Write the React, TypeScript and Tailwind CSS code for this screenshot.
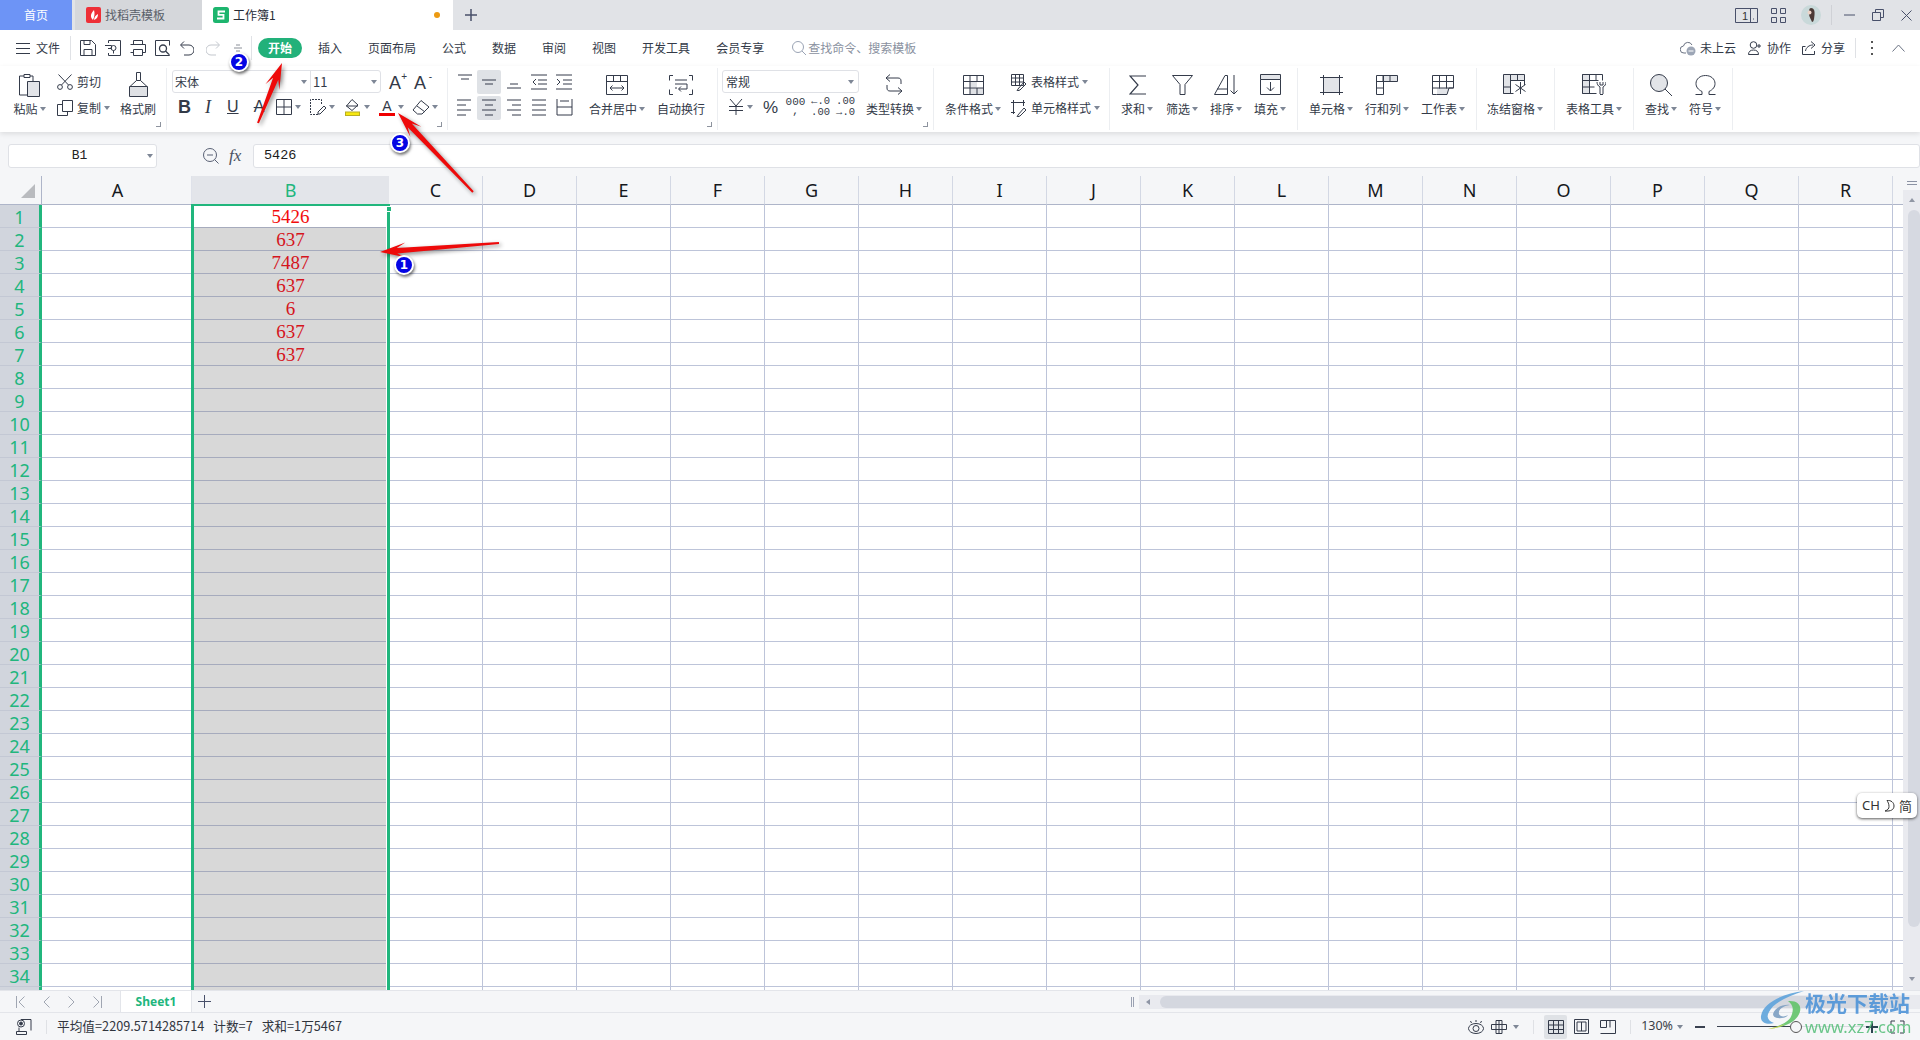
import React from "react";

const INK = "#343b4a";
type IP = { w: number; h: number; children?: React.ReactNode; sw?: number; className?: string };
const I = ({ w, h, children, sw = 1, className = "" }: IP) => (
  <svg width={w} height={h} viewBox={`0 0 ${w} ${h}`} fill="none" stroke={INK} strokeWidth={sw} className={`shrink-0 ${className}`}>
    {children}
  </svg>
);
const Caret = ({ className = "" }: { className?: string }) => (
  <svg width="6" height="4" viewBox="0 0 6 4" className={`shrink-0 ${className}`}><path d="M0 0h6L3 4z" fill="#7e8796" /></svg>
);
const Launcher = () => (
  <span className="absolute right-[5px] bottom-[3px] w-[5px] h-[5px] border-r border-b border-[#8d939e]" />
);

const Large = ({ w, icon, label, caret = true }: { w: number; icon: React.ReactNode; label: string; caret?: boolean }) => (
  <div className="flex flex-col items-center shrink-0" style={{ width: w }}>
    <div className="h-[33px] flex items-center justify-center">{icon}</div>
    <div className="h-[16px] flex items-center whitespace-nowrap">
      <span>{label}</span>
      {caret && <Caret className="ml-[2px]" />}
    </div>
  </div>
);
const Group = ({ w, pl, children }: { w: number; pl: number; children: React.ReactNode }) => (
  <div className="relative h-[62px] flex border-r border-[#eceef1] shrink-0" style={{ width: w, paddingLeft: pl }}>
    {children}
  </div>
);

const icons = {
  paste: (
    <I w={21} h={26}>
      <path d="M5 4H.5v19H8M11 4h3v5" />
      <path d="M5 2.500h6v3H5z" />
      <path d="M8.500 9.500h12v15h-12z" fill="#e2e4e8" />
    </I>
  ),
  cut: (
    <I w={16} h={16}>
      <circle cx="3" cy="13" r="2.400" /><circle cx="13" cy="13" r="2.400" />
      <path d="M1.500 .5 11.500 11M14.500 .5 4.500 11" />
    </I>
  ),
  copy: (
    <I w={16} h={16}>
      <path d="M5.500 .5h10v11h-10z" /><path d="M5.500 4.500h-5v11h10v-4" />
    </I>
  ),
  brush: (
    <I w={19} h={26}>
      <path d="M7.500 .5h4v8h-4z" />
      <path d="M7.500 8.500 1 14.500h17l-6.500-6" />
      <path d="M.5 14.500h18v10H.5z" fill="#dfe1e5" />
    </I>
  ),
};

const Menu = ({ ml, children }: { ml: number; children: string }) => (
  <span className="whitespace-nowrap" style={{ marginLeft: ml }}>{children}</span>
);

const cols = "CDEFGHIJKLMNOPQR".split("");
const values: Record<number, string> = { 1: "5426", 2: "637", 3: "7487", 4: "637", 5: "6", 6: "637", 7: "637" };

function arrow(tx: number, ty: number, px: number, py: number) {
  const L = Math.hypot(px - tx, py - ty);
  const ux = (px - tx) / L, uy = (py - ty) / L;
  const nx = -uy, ny = ux;
  const pt = (d: number, o: number) => `${tx + ux * d + nx * o},${ty + uy * d + ny * o}`;
  return [pt(0, -1), pt(L - 17, -2.8), pt(L - 26, -7.5), pt(L, 0), pt(L - 26, 7.5), pt(L - 17, 2.8), pt(0, 1)].join(" ");
}

const Badge = ({ n, className }: { n: string; className: string }) => (
  <div className={`absolute z-20 w-[20px] h-[20px] rounded-full bg-[#0404e4] border-2 border-white shadow-[1px_2px_3px_rgba(0,0,0,0.55)] flex items-center justify-center text-white font-bold text-[12px] leading-none font-['DejaVu_Sans',sans-serif] ${className}`}>
    {n}
  </div>
);

export default function App() {
  return (
    <div className="relative w-[1920px] h-[1040px] overflow-hidden bg-white text-[12px] text-[#333a48] font-['Noto_Sans_CJK_SC','Noto_Sans',sans-serif]">
      {/* Title bar */}
      <div className="h-[30px] bg-[#e1e3e7] flex items-stretch">
        <div className="w-[72px] bg-[#6d94f6] text-white flex items-center justify-center">首页</div>
        <div className="w-[127px] ml-[3px] bg-[#d5d7db] flex items-center pl-[11px] text-[#5a5f69]">
          <svg width="15" height="16" viewBox="0 0 15 16" className="shrink-0">
            <rect width="15" height="16" rx="2" fill="#ee2f37" />
            <path d="M7 13C3.500 10 5 6 8 3c1 3 .5 7-1 10zM8 13c3-1 4-3 4-6-2 1-4 3-4 6z" fill="#fff" />
          </svg>
          <span className="ml-[4px]">找稻壳模板</span>
        </div>
        <div className="w-[251px] bg-white flex items-center pl-[11px] text-[#262b35]">
          <svg width="16" height="16" viewBox="0 0 16 16" className="shrink-0">
            <rect width="16" height="16" rx="2.500" fill="#1db56e" />
            <path d="M12 4.500H5.500v3.300h5v3.700H4" fill="none" stroke="#fff" strokeWidth="1.800" />
          </svg>
          <span className="ml-[4px]">工作簿1</span>
          <span className="ml-auto mr-[13px] w-[6px] h-[6px] rounded-full bg-[#ec9a12]" />
        </div>
        <div className="ml-[12px] flex items-center">
          <I w={12} h={12} sw={1.500}><path d="M6 0v12M0 6h12" stroke="#48506a" /></I>
        </div>
        <div className="ml-auto flex items-center pr-[8px]">
          <I w={23} h={15}>
            <path d="M.5 .5h22v14H.5zM15.500 .5v14" stroke="#48506a" />
            <text x="7" y="12" fontSize="11" fill="#333" stroke="none" fontFamily="Liberation Sans">1</text>
            <path d="M18 11h1" stroke="#48506a" />
          </I>
          <I w={15} h={15} className="ml-[13px]"><path d="M.5 .5h5v5h-5zM9.500 .5h5v5h-5zM.5 9.500h5v5h-5zM9.500 9.500h5v5h-5z" stroke="#48506a" /></I>
          <svg width="20" height="20" viewBox="0 0 20 20" className="ml-[15px] shrink-0">
            <circle cx="10" cy="10" r="10" fill="#c9d9da" />
            <path d="M10 3c3 0 4 3 3.500 7S13 17 11 17c-1-3-3-5-3-8s0-6 2-6z" fill="#4b3a36" />
            <circle cx="8.500" cy="7.500" r="2" fill="#ecd3c7" />
          </svg>
          <span className="ml-[10px] w-px h-[20px] bg-[#cfd1d6]" />
          <I w={11} h={2} className="ml-[12px]"><path d="M0 1h11" stroke="#48506a" /></I>
          <I w={12} h={12} className="ml-[17px]"><path d="M.5 3.500h8v8h-8zM3.500 3V.5h8v8H9" stroke="#48506a" /></I>
          <I w={11} h={11} className="ml-[17px]"><path d="M.5 .5l10 10M10.500 .5l-10 10" stroke="#48506a" /></I>
        </div>
      </div>

      {/* Menu row */}
      <div className="h-[36px] flex items-center pl-[16px] pr-[15px] bg-white">
        <I w={14} h={11}><path d="M0 .5h14M0 5.500h14M0 10.500h14" /></I>
        <Menu ml={6}>文件</Menu>
        <span className="ml-[10px] w-px h-[24px] bg-[#e0e2e6]" />
        <div className="ml-[9px] flex items-center gap-[9px]">
          <I w={16} h={16}><path d="M.5 .5h11l4 4v11H.5zM4 15v-5.500h8V15M4 .5v4h6v-4" /></I>
          <I w={16} h={16}><path d="M3.500 3V.5h12v15h-12V13M0 5.500h6.500v3H3M6 8a2.500 2.500 0 1 0 5 0 2.500 2.500 0 0 0-5 0zM8.500 10.500v3" /></I>
          <I w={16} h={16}><path d="M3.500 4.500v-4h9v4M.5 4.500h15v8h-3M3.500 12.500h-3M3.500 9.500h9v6h-9z" /></I>
          <I w={15} h={16}><path d="M14.500 14.500v1H.5V.5h14v5" /><circle cx="8" cy="8.500" r="3.500" strokeWidth="1.300" /><path d="M10.500 11l3.500 3.500" strokeWidth="1.300" /></I>
          <I w={14} h={15} className="ml-[1px]"><path d="M4 .5 .5 4 4 7.500M1 4h8a4.500 4.500 0 0 1 0 10H4" /></I>
          <I w={14} h={15} className="ml-[3px]"><g stroke="#c3c7cd"><path d="M10 .5 13.500 4 10 7.500M13 4H5a4.500 4.500 0 0 0 0 10h5" /></g></I>
          <I w={8} h={8} className="ml-[5px]"><path d="M2 1h4M0 4h8M2 7h4" stroke="#8a8f98" /></I>
        </div>
        <span className="ml-[9px] w-px h-[24px] bg-[#e0e2e6]" />
        <span className="ml-[6px] w-[44px] h-[20px] rounded-full bg-[#22b17a] text-white flex items-center justify-center font-bold">开始</span>
        <Menu ml={16}>插入</Menu>
        <Menu ml={26}>页面布局</Menu>
        <Menu ml={26}>公式</Menu>
        <Menu ml={26}>数据</Menu>
        <Menu ml={26}>审阅</Menu>
        <Menu ml={26}>视图</Menu>
        <Menu ml={26}>开发工具</Menu>
        <Menu ml={26}>会员专享</Menu>
        <I w={14} h={14} className="ml-[28px]"><g stroke="#9aa3b4"><circle cx="6" cy="6" r="5.500" /><path d="M10 10l4 4" /></g></I>
        <span className="ml-[2px] text-[#8a91a0]">查找命令、搜索模板</span>
        <div className="ml-auto flex items-center">
          <svg width="16" height="15" viewBox="0 0 16 15" className="shrink-0">
            <path d="M6 12H4a3.500 3.500 0 0 1-.500-7A4.500 4.500 0 0 1 12 4" fill="none" stroke="#6a7282" />
            <circle cx="11" cy="10" r="4.500" fill="#9da6b6" /><path d="M8.500 10h5" stroke="#fff" />
          </svg>
          <span className="ml-[4px]">未上云</span>
          <I w={14} h={14} className="ml-[12px]"><circle cx="5.500" cy="4" r="3.300" /><path d="M.5 13.500c0-3 2-4.500 5-4.500s5 1.500 5 4.500zM11 3v4M9 5h4" /></I>
          <span className="ml-[5px]">协作</span>
          <I w={14} h={14} className="ml-[11px]"><path d="M3.500 5.500h-3v8h12V10M3.500 10C4 6.500 7 4 11 4M9 .5 13 4l-4 3.500" /></I>
          <span className="ml-[5px]">分享</span>
          <span className="ml-[10px] w-px h-[20px] bg-[#dfe1e5]" />
          <span className="ml-[15px] flex flex-col gap-[4px]">
            <span className="w-[2px] h-[2px] bg-[#555]" /><span className="w-[2px] h-[2px] bg-[#555]" /><span className="w-[2px] h-[2px] bg-[#555]" />
          </span>
          <I w={13} h={8} className="ml-[19px]"><path d="M.5 7.500 6.500 1l6 6.500" stroke="#6a7282" /></I>
        </div>
      </div>

      {/* Ribbon */}
      <div className="relative z-10 h-[66px] pt-[2px] flex bg-white shadow-[0_2px_5px_rgba(0,0,0,0.1)]">
        <Group w={167} pl={13}>
          <Large w={33} icon={icons.paste} label="粘贴" />
          <div className="ml-[11px] w-[55px] pt-[1px] shrink-0">
            <div className="h-[26px] flex items-center">{icons.cut}<span className="ml-[4px]">剪切</span></div>
            <div className="h-[26px] flex items-center">{icons.copy}<span className="ml-[4px]">复制</span><Caret className="ml-[3px]" /></div>
          </div>
          <div className="ml-[8px]"><Large w={36} icon={icons.brush} label="格式刷" caret={false} /></div>
          <Launcher />
        </Group>

        <Group w={281} pl={5}>
          <div className="pt-[2px]">
            <div className="flex items-center">
              <div className="w-[209px] h-[23px] border border-[#dfe1e6] rounded-[3px] flex items-center">
                <div className="w-[138px] h-full border-r border-[#dfe1e6] flex items-center pl-[2px] pr-[3px]"><span>宋体</span><Caret className="ml-auto" /></div>
                <div className="flex-1 h-full flex items-center pl-[2px] pr-[3px]"><span className="text-[13px]">11</span><Caret className="ml-auto" /></div>
              </div>
              <div className="ml-[8px] flex items-end h-[20px] w-[15px] font-['Liberation_Sans',sans-serif] text-[18px] leading-none relative">A<span className="text-[10px] absolute -right-[3px] top-0">+</span></div>
              <div className="ml-[10px] flex items-end h-[20px] w-[15px] font-['Liberation_Sans',sans-serif] text-[18px] leading-none relative">A<span className="text-[10px] absolute -right-[3px] top-0">-</span></div>
            </div>
            <div className="mt-[1px] h-[26px] flex items-center pl-[6px]">
              <span className="w-[12px] font-['Liberation_Sans',sans-serif] font-bold text-[18px] leading-none">B</span>
              <span className="ml-[15px] w-[8px] font-['Liberation_Serif',serif] italic text-[18px] leading-none">I</span>
              <span className="ml-[14px] w-[12px] font-['Liberation_Sans',sans-serif] text-[16px] leading-none underline">U</span>
              <span className="ml-[13px] w-[14px] font-['Liberation_Sans',sans-serif] text-[16px] leading-none line-through text-center">A</span>
              <I w={16} h={16} className="ml-[10px]"><path d="M.5 .5h15v15H.5zM8 .5v15M.5 8h15" /></I>
              <Caret className="ml-[3px]" />
              <I w={16} h={16} className="ml-[9px]"><path d="M8 15.500H.5V.5h11v5" strokeDasharray="2 1" /><path d="M14 7l2 2-6 6H8v-2z" /></I>
              <Caret className="ml-[3px]" />
              <svg width="15" height="17" viewBox="0 0 15 17" fill="none" stroke={INK} className="ml-[10px] shrink-0">
                <path d="M7 .5 13 6 7 11.500 1.500 7z" /><path d="M1 7h12" />
                <rect x=".5" y="13" width="14" height="3.500" fill="#f7e810" stroke="#b9ae22" />
              </svg>
              <Caret className="ml-[4px]" />
              <div className="ml-[9px] w-[16px] flex flex-col items-center">
                <span className="font-['Liberation_Sans',sans-serif] text-[14px] leading-[14px]">A</span>
                <span className="w-[16px] h-[3px] bg-[#f00000]" />
              </div>
              <Caret className="ml-[3px]" />
              <I w={18} h={15} className="ml-[8px]"><path d="M9 .5 17 7l-7 7H5.500L1 10z" /><path d="M5 6l8 6" /></I>
              <Caret className="ml-[2px]" />
            </div>
          </div>
          <Launcher />
        </Group>

        <Group w={270} pl={4}>
          <div className="pt-[2px] grid grid-cols-[repeat(5,24px)] gap-x-[1px] gap-y-[2px] h-min shrink-0">
            {[
              "M3 4h14M6 8h8",
              "M2 9h14M5 13h8",
              "M5 13h8M2 17h14",
              "M1 4h16M8 9h9M8 13h9M1 18h16M6 8l-3 3 3 3",
              "M1 4h16M8 9h9M8 13h9M1 18h16M2 8l3 3-3 3",
              "M2 3h14M2 8h9M2 13h14M2 18h9",
              "M2 3h14M5 8h8M2 13h14M5 18h8",
              "M2 3h14M7 8h9M2 13h14M7 18h9",
              "M2 3h14M2 8h14M2 13h14M2 18h14",
              "M2 2v16M17 2v16M2 18h15M2 10h15M5 4h9",
            ].map((d, i) => (
              <div key={i} className={`h-[24px] flex items-center justify-center rounded-[2px] ${i === 1 || i === 6 ? "bg-[#dfe2e6]" : ""}`}>
                <I w={18} h={22}><path d={d} /></I>
              </div>
            ))}
          </div>
          <div className="ml-[12px]"><Large w={58} label="合并居中" icon={<I w={22} h={20}><path d="M.5.5h21v19H.5zM.5 6.500h21M7.500.5v6M14.500.5v6M4 13h14M6.500 10.500 4 13l2.500 2.500M15.500 10.500 18 13l-2.500 2.500" /></I>} /></div>
          <div className="ml-[11px]"><Large w={48} caret={false} label="自动换行" icon={<I w={24} h={20}><path d="M4 .5H.5v5M20 .5h3.500v5M.5 14.500v5H4M23.500 14.500v5H20M6 5h12M6 9h12v5H10M12 11.500 9.500 14l2.500 2.500M6 13h2" /></I>} /></div>
          <Launcher />
        </Group>

        <Group w={216} pl={4}>
          <div className="pt-[2px] w-[137px] shrink-0">
            <div className="h-[23px] border border-[#dfe1e6] rounded-[3px] flex items-center pl-[3px] pr-[4px]"><span>常规</span><Caret className="ml-auto" /></div>
            <div className="mt-[1px] h-[26px] flex items-center">
              <I w={14} h={16} className="ml-[7px]"><path d="M1 0l6 7 6-7M0 7.500h14M0 11.500h14M7 7v9" /></I>
              <Caret className="ml-[4px]" />
              <span className="ml-[10px] w-[14px] text-center font-['Liberation_Sans',sans-serif] text-[17px] leading-none">%</span>
              <span className="ml-[10px] w-[17px] flex flex-col items-center font-['Liberation_Mono',monospace] text-[11px] leading-[9px]"><span>000</span><span>,</span></span>
              <span className="ml-[9px] w-[17px] flex flex-col items-end font-['Liberation_Mono',monospace] text-[10.500px] leading-[11px]"><span>←.0</span><span>.00</span></span>
              <span className="ml-[8px] w-[17px] flex flex-col items-end font-['Liberation_Mono',monospace] text-[10.500px] leading-[11px]"><span>.00</span><span>→.0</span></span>
            </div>
          </div>
          <div className="ml-[6px]"><Large w={58} label="类型转换" icon={<I w={18} h={21}><path d="M5 .5 1 4l4 3.500M1 4h12c2 0 3 1 3 3v3M13 20.500l4-3.500-4-3.500M17 17H5c-2 0-3-1-3-3v-3" /></I>} /></div>
          <Launcher />
        </Group>

        <Group w={176} pl={10}>
          <Large w={58} label="条件格式" icon={
            <I w={21} h={20}>
              <path d="M7 6.500h7v6H7zM7 13h14v6H7z" fill="#dfe1e5" stroke="none" />
              <path d="M.5.5h20v19H.5zM.5 6.500h20M.5 13h20M7 .5v19M14 .5v6M14 13v6" />
            </I>
          } />
          <div className="ml-[9px] pt-[1px] shrink-0">
            <div className="h-[26px] flex items-center">
              <I w={16} h={17}><path d="M.5.5h12v11H.5zM.5 4h12M.5 8h12M4.500 .5v11M8.500 .5v11M7 15l6-7 2 2-6 6-3 1z" /></I>
              <span className="ml-[4px]">表格样式</span><Caret className="ml-[3px]" />
            </div>
            <div className="h-[26px] flex items-center">
              <I w={16} h={17}><path d="M0 2.500h14M2.500 0v14M12.500 0v6M0 12.500h4M7 15l6-7 2 2-6 6-3 1z" /></I>
              <span className="ml-[4px]">单元格样式</span><Caret className="ml-[3px]" />
            </div>
          </div>
        </Group>

        <Group w={188} pl={10}>
          <Large w={34} label="求和" icon={<I w={17} h={20}><path d="M17 1H1l8 9-8 9h16" strokeWidth="1.200" /></I>} />
          <div className="ml-[11px]"><Large w={34} label="筛选" icon={<I w={21} h={20}><path d="M.5.5h20L13 9.500v10H8v-10z" /></I>} /></div>
          <div className="ml-[10px]"><Large w={34} label="排序" icon={<I w={24} h={20}><path d="M11 .5 .5 19.500h13V.5zM3 14h10M20 0v19M16.500 15.500 20 19l3.500-3.500" /></I>} /></div>
          <div className="ml-[10px]"><Large w={34} label="填充" icon={<I w={21} h={21}><path d="M.5.5h20v5H.5z" fill="#e2e4e8" /><path d="M.5 5.500v15h20v-15M10.500 8v9M7 13.500l3.500 3.500 3.500-3.500" /></I>} /></div>
        </Group>

        <Group w={179} pl={10}>
          <Large w={46} label="单元格" icon={<I w={23} h={20}><path d="M4 3h15v14H4z" fill="#e2e4e8" stroke="none" /><path d="M0 2.500h23M0 17.500h23M3.500 0v20M19.500 0v20" /></I>} />
          <div className="ml-[10px]"><Large w={46} label="行和列" icon={<I w={22} h={20}><path d="M7 .5h14.500v6H7z" fill="#e2e4e8" /><path d="M.5.5h7v19h-7zM.5 6.500h7M.5 13h7M14 .5v6" /></I>} /></div>
          <div className="ml-[10px]"><Large w={46} label="工作表" icon={<I w={22} h={20}><path d="M5 13h12l-2 6H5z" fill="#e2e4e8" stroke="none" /><path d="M4.500 19.500H.5V.5h21v12.500H17l-2 6.500H5zM.5 6.500h21M.5 13h21M7.500.5v13M14.500.5v13" /></I>} /></div>
        </Group>

        <Group w={78} pl={9}>
          <Large w={58} label="冻结窗格" icon={
            <I w={24} h={21}>
              <path d="M.5.5h7v19h-7zM7.500.5h14v6h-14z" fill="#e2e4e8" />
              <path d="M.5 13h7M14.500 .5v6M21.500 6v5M.5 19.500h10M17.500 8v12M12.500 10.500l10 7M22.500 10.500l-10 7" />
            </I>
          } />
        </Group>

        <Group w={79} pl={10}>
          <Large w={58} label="表格工具" icon={
            <I w={24} h={21}>
              <path d="M.5.5h7v19h-7z" fill="#e2e4e8" />
              <path d="M.5.5h20v6M.5 6.500h16M.5 13h12M7.500.5v19M14 .5v6M.5 19.500h14M18 20V13c-2-1-3-3-3-5M21 20V13c2-1 3-3 3-5M18 20.500h3M18 8v3h3V8" />
            </I>
          } />
        </Group>

        <Group w={99} pl={10}>
          <Large w={34} label="查找" icon={<I w={22} h={22}><circle cx="9" cy="9" r="8.500" fill="#e2e4e8" /><path d="M15 15l7 7" /></I>} />
          <div className="ml-[10px]"><Large w={34} label="符号" icon={<I w={21} h={20}><path d="M.5 19.500H7v-3C3 14.500 1 12 1 8.500 1 4 5 .5 10.500.5S20 4 20 8.500c0 3.500-2 6-6 8v3h6.500" /></I>} /></div>
        </Group>
      </div>

      {/* Formula bar */}
      <div className="h-[44px] bg-[#f5f6f8] flex pt-[12px] pl-[8px]">
        <div className="w-[149px] h-[24px] bg-white border border-[#dfe1e6] rounded-[3px] flex items-center pr-[3px]">
          <span className="flex-1 text-center font-['Liberation_Mono',monospace] text-[13px] text-[#222] pl-[3px]">B1</span>
          <Caret />
        </div>
        <I w={16} h={16} className="ml-[46px] mt-[4px]"><g stroke="#596074"><circle cx="7" cy="7" r="6.500" /><path d="M4 7h6M11.500 11.500l4 4" /></g></I>
        <span className="ml-[10px] w-[16px] font-['Liberation_Serif',serif] italic text-[17px] leading-[24px] text-[#4a5162]">fx</span>
        <div className="ml-[8px] flex-1 h-[24px] bg-white border border-[#dfe1e6] rounded-[3px] flex items-center pl-[10px] font-['Liberation_Mono',monospace] text-[13.500px] text-[#1c1c1c]">5426</div>
      </div>

      {/* Sheet */}
      <div className="h-[814px] flex">
        <div className="relative w-[1903px] overflow-hidden">
          <div className="grid grid-cols-[42px_150px_197px_repeat(16,94px)_10px] grid-rows-[29px] auto-rows-[23px]">
            <div className="bg-[#f5f6f8] border-b border-r border-[#aeb5c9] flex items-end justify-end pr-[6px] pb-[6px]">
              <svg width="14" height="14" viewBox="0 0 14 14"><path d="M14 0v14H0z" fill="#b9bbbf" /></svg>
            </div>
            <div className="bg-[#f5f6f8] border-b border-r border-b-[#aeb5c9] border-r-[#dfe2ea] flex items-center justify-center pl-[2px] text-[18px] font-['Noto_Sans',sans-serif] text-[#15181d]">A</div>
            <div className="bg-[#e3e5ea] border-b border-[#aeb5c9] flex items-center justify-center text-[18px] font-['Noto_Sans',sans-serif] text-[#21b67d]">B</div>
            {cols.map((c) => (
              <div key={c} className="bg-[#f5f6f8] border-b border-r border-b-[#aeb5c9] border-r-[#d3d8e4] flex items-center justify-center text-[18px] font-['Noto_Sans',sans-serif] text-[#15181d]">{c}</div>
            ))}
            <div className="bg-[#f5f6f8] border-b border-[#aeb5c9]" />
            {Array.from({ length: 35 }, (_, i) => i + 1).map((r) => (
              <React.Fragment key={r}>
                <div className="bg-[#d1d5dd] border-b border-[#c3c8d4] border-r-[3px] border-r-[#21b67d] flex items-center justify-center pt-[1px] text-[18px] leading-none font-['Noto_Sans',sans-serif] text-[#21b67d]">{r < 35 ? r : ""}</div>
                <div className="border-b border-r border-[#bdc4d9]" />
                <div className={`border-b border-[#a6abbd] flex items-center justify-center pt-[1px] font-['Liberation_Serif',serif] text-[19px] leading-none ${r === 1 ? "bg-white text-[#f20c0c]" : "bg-[#d8d8d8] text-[#d5141c]"}`}>
                  {values[r] ?? ""}
                </div>
                {cols.map((c) => <div key={c} className="border-b border-r border-[#bdc4d9]" />)}
                <div className="border-b border-[#bdc4d9]" />
              </React.Fragment>
            ))}
          </div>
          {/* Selection frame */}
          <div className="absolute left-[191px] top-[28px] w-[199px] h-[900px] border-x-[3px] border-t-2 border-[#21b67d] shadow-[inset_-1px_0_0_#fff]" />
          <div className="absolute left-[386px] top-[30px] w-[6px] h-[6px] bg-[#21b67d] border border-white" />
        </div>
        <div className="flex-1 bg-[#e9eaef] flex flex-col items-center">
          <div className="h-[14px] w-full bg-[#f5f6f8] flex flex-col items-center justify-center gap-[2px]">
            <span className="w-[10px] h-px bg-[#8c93a4]" /><span className="w-[10px] h-px bg-[#8c93a4]" />
          </div>
          <svg width="6" height="4" viewBox="0 0 6 4" className="mt-[8px]"><path d="M3 0l3 4H0z" fill="#9096a4" /></svg>
          <div className="mt-[8px] ml-[4px] w-[12px] h-[717px] rounded-full bg-[#d6d9e1]" />
          <svg width="6" height="4" viewBox="0 0 6 4" className="mt-[50px]"><path d="M0 0h6L3 4z" fill="#9096a4" /></svg>
        </div>
      </div>

      {/* Sheet tabs */}
      <div className="h-[22px] bg-[#f5f6f8] border-t border-[#e3e5ea] flex items-center pl-[16px]">
        <I w={9} h={12}><g stroke="#a0a6b2"><path d="M.5 0v12M8.500 .5 3 6l5.500 5.500" /></g></I>
        <I w={7} h={12} className="ml-[18px]"><path d="M6.500 .5 1 6l5.500 5.500" stroke="#a0a6b2" /></I>
        <I w={7} h={12} className="ml-[18px]"><path d="M.5 .5 6 6l-5.500 5.500" stroke="#a0a6b2" /></I>
        <I w={9} h={12} className="ml-[18px]"><g stroke="#a0a6b2"><path d="M8.500 0v12M.5 .5 6 6l-5.500 5.500" /></g></I>
        <div className="ml-[18px] w-[72px] h-full bg-white border-r border-[#e3e5ea] border-l flex items-center justify-center text-[#21b67d] font-bold font-['Noto_Sans',sans-serif]">Sheet1</div>
        <I w={13} h={13} className="ml-[6px]"><path d="M6.500 0v13M0 6.500h13" stroke="#48506a" /></I>
        <span className="ml-[920px] w-[3px] h-[10px] border-x border-[#9aa1b2]" />
        <div className="ml-[5px] flex-1 h-[14px] bg-[#e9eaef] flex items-center pl-[7px]">
          <svg width="4" height="6" viewBox="0 0 4 6" className="shrink-0"><path d="M4 0v6L0 3z" fill="#8e95a5" /></svg>
          <div className="ml-[10px] h-[12px] w-[745px] rounded-full bg-[#d4d7df]" />
        </div>
      </div>

      {/* Status bar */}
      <div className="h-[28px] bg-[#f5f6f8] border-t border-[#e3e5ea] flex items-center pl-[16px] pr-[15px] text-[#30343d]">
        <I w={16} h={16}><circle cx="5" cy="4.500" r="3.500" /><circle cx="5" cy="4.500" r="1.500" fill={INK} /><path d="M5 .5h10v11M.5 12.500h10v3H.5zM3 8.500v4" /></I>
        <span className="ml-[14px] w-px h-[14px] bg-[#dfe1e5]" />
        <span className="ml-[10px] whitespace-nowrap text-[12.700px] -translate-y-px">平均值=2209.5714285714</span>
        <span className="ml-[9px] whitespace-nowrap text-[12.700px] -translate-y-px">计数=7</span>
        <span className="ml-[9px] whitespace-nowrap text-[12.700px] -translate-y-px">求和=1万5467</span>
        <div className="ml-auto flex items-center">
          <I w={16} h={14}><ellipse cx="8" cy="8.500" rx="7.500" ry="5" /><circle cx="8" cy="8.500" r="3" /><path d="M8 0v2M2.500 1l1 2M13.500 1l-1 2" /></I>
          <I w={16} h={14} className="ml-[7px]"><path d="M5 .5h6v4h4.500v5H11v4H5v-4H.5v-5H5zM5 4.500h6v5H5zM8 .5v13" /></I>
          <Caret className="ml-[6px]" />
          <span className="ml-[14px] w-px h-[14px] bg-[#dfe1e5]" />
          <div className="ml-[10px] w-[23px] h-[24px] bg-[#dfe2e6] rounded-[2px] flex items-center justify-center">
            <I w={16} h={14}><path d="M.5 .5h15v13H.5zM.5 5h15M.5 9.500h15M5.500 .5v13M10.500 .5v13" /></I>
          </div>
          <I w={15} h={15} className="ml-[7px]"><path d="M.5 .5h14v14H.5zM3 3h9v9H3zM7.500 3v9" /></I>
          <I w={16} h={14} className="ml-[11px]"><path d="M.5 13.500h15V.5h-15v7h6V.5M10 .5v7" /></I>
          <span className="ml-[14px] w-px h-[14px] bg-[#dfe1e5]" />
          <span className="ml-[10px] font-['Noto_Sans',sans-serif] text-[12.500px] text-[#3b3f48]">130%</span>
          <Caret className="ml-[4px]" />
          <span className="ml-[12px] w-[10px] h-[2px] bg-[#3a4150]" />
          <span className="ml-[12px] w-[73px] h-px bg-[#3a4150]" />
          <span className="w-[12px] h-[12px] rounded-full border border-[#555] bg-[#f5f6f8]" />
          <span className="w-[68px] h-px bg-[#d7dae1]" />
          <I w={12} h={12} sw={2} className="ml-[-4px]"><path d="M6 0v12M0 6h12" stroke="#2c4450" /></I>
          <I w={15} h={14} className="ml-[12px]"><path d="M1 5V1h4M10 1h4v4M1 9v4h4M10 13h4V9" /></I>
        </div>
      </div>

      {/* Tooltip chip */}
      <div className="absolute z-20 left-[1857px] top-[793px] w-[60px] h-[25px] bg-white rounded-[5px] shadow-[0_1px_3px_rgba(0,0,0,0.65)] flex items-center justify-center gap-[4px] text-[13px] text-[#333] font-['Noto_Sans','Noto_Sans_CJK_SC',sans-serif]">
        <span>CH</span>
        <svg width="11" height="12" viewBox="0 0 11 12" fill="none" stroke="#333" className="shrink-0"><path d="M3 .5c4-.5 7 2 7 5.500S7 11.500 1 11c3-1 4-2.500 4-4.500 0-2.500-1-4.500-2-6z" /></svg>
        <span className="font-['Noto_Sans_CJK_SC',sans-serif]">简</span>
      </div>

      {/* Annotation arrows */}
      <svg width="1920" height="1040" viewBox="0 0 1920 1040" className="absolute z-20 left-0 top-0 pointer-events-none drop-shadow-[2px_2px_2px_rgba(0,0,0,0.45)]">
        <polygon points={arrow(499, 243, 380, 252)} fill="#ee0a0a" />
        <polygon points={arrow(258, 123, 282, 63)} fill="#ee0a0a" />
        <polygon points={arrow(473, 192, 398, 113)} fill="#ee0a0a" />
      </svg>
      <Badge n="1" className="left-[394px] top-[255px]" />
      <Badge n="2" className="left-[229px] top-[52px]" />
      <Badge n="3" className="left-[390px] top-[133px]" />

      {/* Watermark */}
      <div className="absolute z-20 left-[1760px] top-[989px] flex pointer-events-none">
        <svg width="44" height="40" viewBox="0 0 44 40" className="shrink-0 mt-[1px] opacity-90">
          <path d="M44 1C25 3 3 12 1 26c-1 7 7 9 13 7-6-2-8-6-5-11C13 13 28 6 44 1z" fill="#5fa4dc" />
          <path d="M13 24c2-7 11-10 17-9-8 1-12 5-11 9 1 3 6 3 9 1-2 4-15 5-15-1z" fill="#7d9fc2" />
          <path d="M28 11c12-1 15 7 10 15-5 8-18 12-30 13 12-3 22-7 24-15 2-6 0-10-4-13z" fill="#62c46b" />
          <path d="M8 39c6-1 12-3 17-5-5 3-10 5-17 5z" fill="#e8d84a" />
        </svg>
        <div className="ml-[1px] flex flex-col">
          <span className="h-[27px] text-[21px] leading-[27px] font-bold text-[#4f94d8] whitespace-nowrap opacity-90">极光下载站</span>
          <span className="mt-[2px] text-[16.500px] leading-[18px] text-[#5cc07e] font-['Noto_Sans',sans-serif] whitespace-nowrap opacity-90">www.xz7.com</span>
        </div>
      </div>
    </div>
  );
}
